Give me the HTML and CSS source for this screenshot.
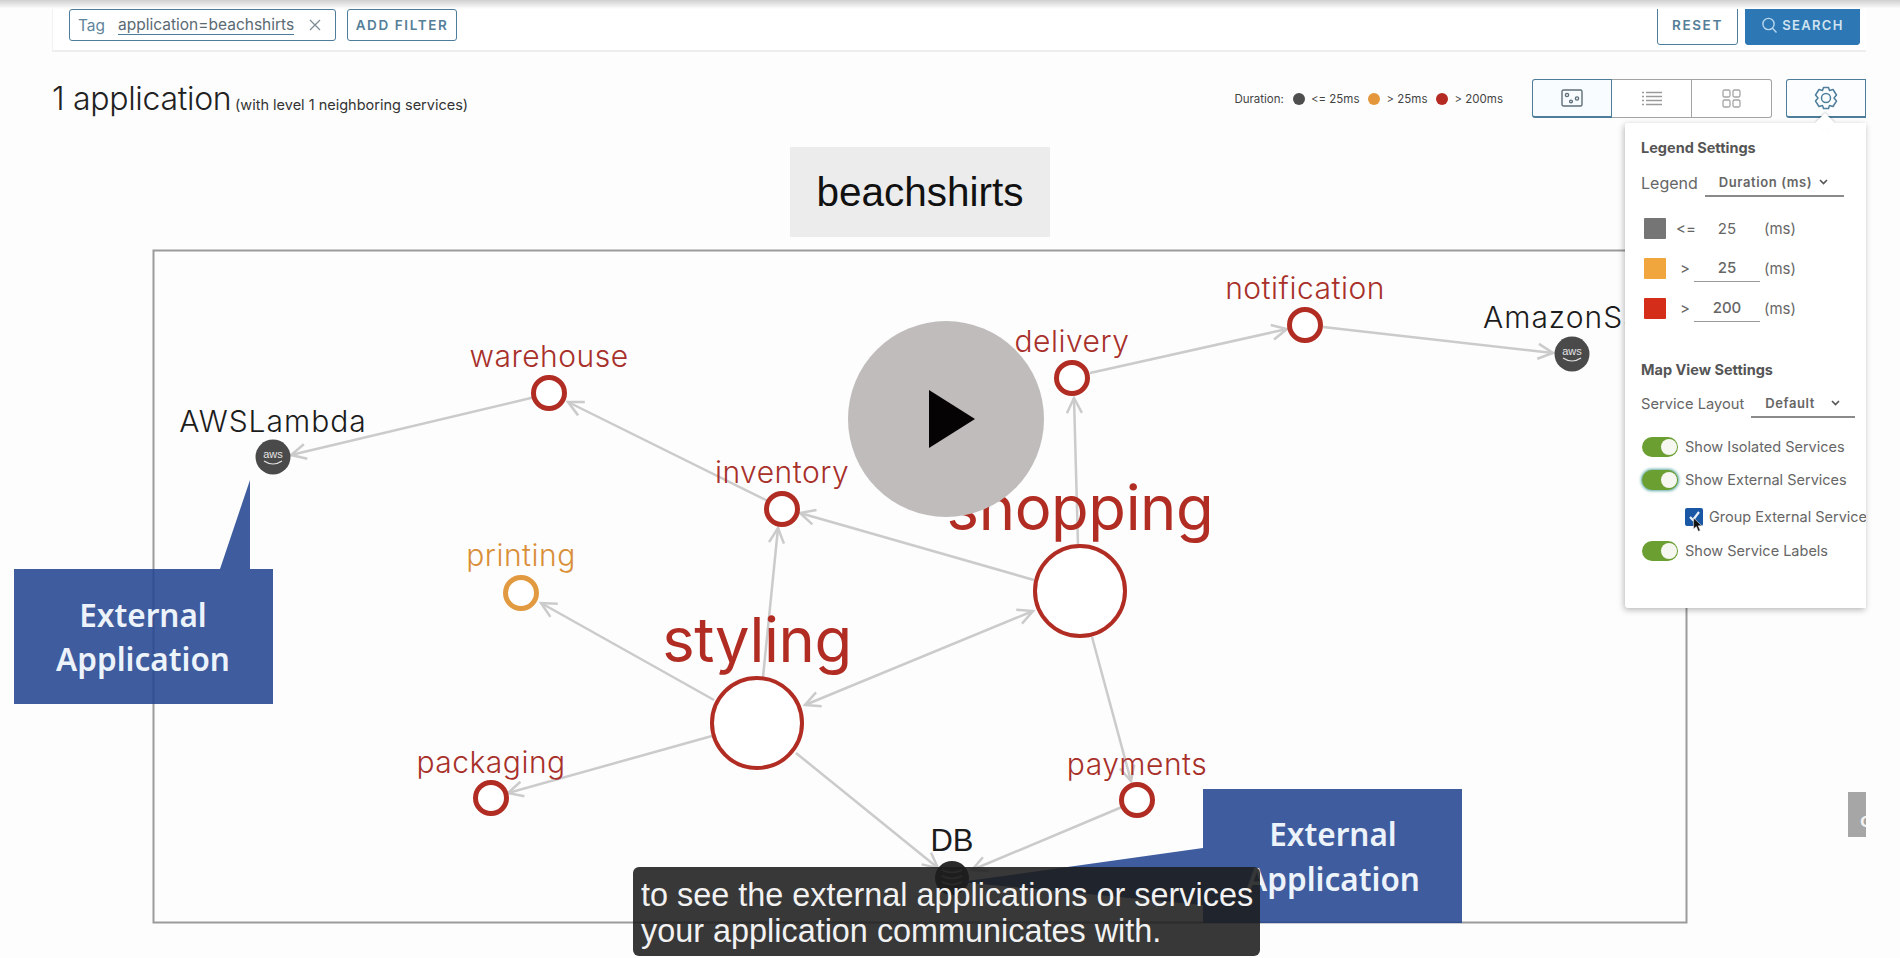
FILE: index.html
```html
<!DOCTYPE html>
<html>
<head>
    <meta charset="utf-8" />
    <title>Application map</title>
    <link rel="stylesheet" href="styles.css">
</head>
<body>
<div class="frame">
    <div class="top_shade"></div>

    <div class="filter_bar">
        <div class="chip">
            <span class="chip_key">Tag</span>
            <span class="chip_value">application=beachshirts</span>
            <svg class="chip_x" width="12" height="12" viewBox="0 0 12 12"><path d="M1 1L11 11M11 1L1 11" stroke="#7d8b95" stroke-width="1.3" fill="none"/></svg>
        </div>
        <div class="btn">ADD FILTER</div>
        <div class="bar_gap"></div>
        <div class="btn btn_reset">RESET</div>
        <div class="btn btn_search">
            <svg width="17" height="17" viewBox="0 0 17 17" fill="none" stroke="#b9d8ee" stroke-width="1.4"><circle cx="7.5" cy="7" r="5.6"/><path d="M11.5 11.2L15.5 15.5"/></svg>
            SEARCH
        </div>
    </div>

    <div class="head_row">
        <div class="app_title">1 application <span class="app_sub">(with level 1 neighboring services)</span></div>
        <div class="legend">
            <span>Duration:</span>
            <i class="dot dot_gray"></i><span>&lt;= 25ms</span>
            <i class="dot dot_orange"></i><span>&gt; 25ms</span>
            <i class="dot dot_red"></i><span>&gt; 200ms</span>
        </div>
        <div class="view_group">
            <div class="view_btn view_on">
                <svg width="22" height="18" viewBox="0 0 22 18" fill="none" stroke="#5f6f78" stroke-width="1.4"><rect x="1" y="1" width="20" height="16" rx="1.5"/><circle cx="6" cy="6" r="1.6"/><circle cx="10" cy="12.500" r="1.400"/><circle cx="16" cy="9.500" r="1.600"/></svg>
            </div>
            <div class="view_btn">
                <svg width="22" height="15" viewBox="0 0 22 15" stroke="#9a9a9a" stroke-width="1.3"><path d="M1 1.500H3M5 1.500H21M1 5.500H3M5 5.500H21M1 9.500H3M5 9.500H21M1 13.500H3M5 13.500H21"/></svg>
            </div>
            <div class="view_btn">
                <svg width="19" height="19" viewBox="0 0 19 19" fill="none" stroke="#a5a5a5" stroke-width="1.3"><rect x="1" y="1" width="7" height="7" rx="1.5"/><rect x="11" y="1" width="7" height="7" rx="1.5"/><rect x="1" y="11" width="7" height="7" rx="1.5"/><rect x="11" y="11" width="7" height="7" rx="1.5"/></svg>
            </div>
        </div>
        <div class="view_btn gear_btn">
            <svg width="24" height="24" viewBox="0 0 24 24" fill="none" stroke="#4f7f9c" stroke-width="1.5"><path d="M9.500 1.500H14.500L15.500 4.500L19 3.500L22.500 9L20 12L22.500 15L19 20.500L15.500 19.500L14.500 22.500H9.500L8.500 19.500L5 20.500L1.500 15L4 12L1.500 9L5 3.500L8.500 4.500Z" stroke-linejoin="round"/><circle cx="12" cy="12" r="4.500"/></svg>
        </div>
    </div>

    <svg class="map" width="1900" height="838" viewBox="0 120 1900 838">
        <defs>
            <marker id="arrow" markerUnits="userSpaceOnUse" markerWidth="24" markerHeight="24" refX="20" refY="12" orient="auto-start-reverse">
                <path d="M5 4.500L20 12L5 19.500" fill="none" stroke="#cbcbcb" stroke-width="2.500"/>
            </marker>
        </defs>

        <rect class="title_box" x="790" y="147" width="260" height="90"/>
        <text class="title_text" x="920" y="206">beachshirts</text>
        <rect class="map_box" x="153.500" y="250.500" width="1533" height="672"/>

        <g class="edges">
            <line x1="535" y1="397" x2="291" y2="455" marker-end="url(#arrow)"/>
            <line x1="768" y1="501" x2="568" y2="402" marker-end="url(#arrow)"/>
            <line x1="763" y1="677" x2="778" y2="528" marker-end="url(#arrow)"/>
            <line x1="1034" y1="580" x2="800" y2="513" marker-end="url(#arrow)"/>
            <line x1="714" y1="700" x2="541" y2="603" marker-end="url(#arrow)"/>
            <line x1="805" y1="705" x2="1033" y2="611" marker-start="url(#arrow)" marker-end="url(#arrow)"/>
            <line x1="712" y1="736" x2="508" y2="793" marker-end="url(#arrow)"/>
            <line x1="796" y1="753" x2="938" y2="868" marker-end="url(#arrow)"/>
            <line x1="1078" y1="545" x2="1074" y2="398" marker-end="url(#arrow)"/>
            <line x1="1090" y1="373" x2="1287" y2="329" marker-end="url(#arrow)"/>
            <line x1="1323" y1="327" x2="1553" y2="353" marker-end="url(#arrow)"/>
            <line x1="1092" y1="637" x2="1131" y2="781" marker-end="url(#arrow)"/>
            <line x1="1122" y1="807" x2="972" y2="870" marker-end="url(#arrow)"/>
        </g>

        <g class="nodes">
            <circle class="ring" cx="549" cy="393" r="15.500"/>
            <circle class="ring" cx="782" cy="509" r="15.500"/>
            <circle class="ring ring_orange" cx="521" cy="593" r="15.500"/>
            <circle class="ring ring_big" cx="757" cy="723" r="45"/>
            <circle class="ring ring_big" cx="1080" cy="591" r="45"/>
            <circle class="ring" cx="1072" cy="378" r="15.500"/>
            <circle class="ring" cx="1305" cy="325" r="15.500"/>
            <circle class="ring" cx="491" cy="798" r="15.500"/>
            <circle class="ring" cx="1137" cy="800" r="15.500"/>

            <g transform="translate(273 457)">
                <circle class="ext_node" r="17.500"/>
                <text class="aws_text" y="1">aws</text>
                <path class="aws_smile" d="M-9 4Q0 10 9 4"/>
            </g>
            <g transform="translate(1572 354)">
                <circle class="ext_node" r="17.500"/>
                <text class="aws_text" y="1">aws</text>
                <path class="aws_smile" d="M-9 4Q0 10 9 4"/>
            </g>
            <g transform="translate(952 878)">
                <circle class="db_node" r="17"/>
                <path class="db_lines" d="M-10 -8Q0 -3 10 -8M-10 -2Q0 3 10 -2M-10 4Q0 9 10 4"/>
            </g>
        </g>

        <g class="labels">
            <text x="549" y="367">warehouse</text>
            <text x="782" y="483">inventory</text>
            <text class="lab_orange" x="521" y="566">printing</text>
            <text class="lab_big" x="757" y="662">styling</text>
            <text class="lab_big" x="1080" y="530">shopping</text>
            <text x="1072" y="352">delivery</text>
            <text x="1305" y="299">notification</text>
            <text x="491" y="773">packaging</text>
            <text x="1137" y="775">payments</text>
            <text class="lab_black" x="273" y="432">AWSLambda</text>
            <text class="lab_black lab_start" x="1483" y="328">AmazonS3</text>
            <text class="lab_black lab_db" x="952" y="851">DB</text>
        </g>

        <g class="callouts">
            <path d="M14 569H220L250 480V569H273V704H14Z"/>
            <path d="M1203 789H1462V923H1203V905L960 882L1203 848Z"/>
            <text x="143" y="627">External</text>
            <text x="143" y="671">Application</text>
            <text x="1333" y="846">External</text>
            <text x="1333" y="891">Application</text>
        </g>
    </svg>

    <div class="side_tab">c</div>

    <div class="popover">
        <div class="pop_title">Legend Settings</div>
        <div class="pop_row">
            <span class="pop_label pop_label_big">Legend</span>
            <span class="pop_select pop_select_wide">Duration (ms) <svg width="9" height="6" viewBox="0 0 9 6"><path d="M1 1L4.500 4.500L8 1" fill="none" stroke="#555" stroke-width="1.600"/></svg></span>
        </div>
        <div class="range_list">
            <div class="range_row"><i class="swatch sw_gray"></i><span class="range_op">&lt;=</span><span class="range_val">25</span><span>(ms)</span></div>
            <div class="range_row"><i class="swatch sw_orange"></i><span class="range_op range_gt">&gt;</span><span class="range_val range_input">25</span><span>(ms)</span></div>
            <div class="range_row"><i class="swatch sw_red"></i><span class="range_op range_gt">&gt;</span><span class="range_val range_input">200</span><span>(ms)</span></div>
        </div>

        <div class="pop_title pop_title_map">Map View Settings</div>
        <div class="pop_row pop_row_map">
            <span class="pop_label">Service Layout</span>
            <span class="pop_select pop_select_layout">Default <svg width="9" height="6" viewBox="0 0 9 6"><path d="M1 1L4.500 4.500L8 1" fill="none" stroke="#555" stroke-width="1.600"/></svg></span>
        </div>
        <div class="toggle_list">
            <div class="toggle_row"><i class="toggle"></i>Show Isolated Services</div>
            <div class="toggle_row"><i class="toggle toggle_focus"></i>Show External Services</div>
            <div class="check_row">
                <i class="check">
                    <svg class="tick" width="18" height="18" viewBox="0 0 18 18"><path d="M5 9L8 12L14 4" fill="none" stroke="#e8f0fa" stroke-width="2.200"/></svg>
                    <svg class="cursor" width="11" height="16" viewBox="0 0 14 20"><path d="M2 1V15L5.500 12L8 18L10.500 17L8 11H12.500Z" fill="#111" stroke="#eee" stroke-width=".8"/></svg>
                </i>
                Group External Services
            </div>
            <div class="toggle_row"><i class="toggle"></i>Show Service Labels</div>
        </div>
    </div>
    <div class="pop_arrow"></div>

    <div class="play">
        <svg width="46" height="58" viewBox="0 0 46 58"><path d="M0 0L46 29L0 58Z" fill="#060304"/></svg>
    </div>

    <div class="caption">to see the external applications or services<br>your application communicates with.</div>
</div>
</body>
</html>
```

FILE: styles.css
```css
html, body {
    margin: 0;
    padding: 0;
}

body {
    background: #fff;
    font-family: "Inter", "Noto Sans", sans-serif;
    color: #333;
    overflow: hidden;
}

.frame {
    position: relative;
    width: 1900px;
    height: 958px;
    overflow: hidden;
    background: #fdfdfd;
}

.top_shade {
    position: absolute;
    left: 0;
    top: 0;
    width: 100%;
    height: 9px;
    background: linear-gradient(180deg, #cfcfcf 0%, #ececec 60%, #fff 100%);
    z-index: 2;
}

/* filter bar */
.filter_bar {
    display: flex;
    align-items: center;
    gap: 11px;
    height: 50px;
    margin: 0 34px 0 52px;
    padding: 0 6px 0 16px;
    border-left: 1px solid #f1f1f1;
    border-bottom: 2px solid #eeeeee;
    background: #fff;
}

.bar_gap {
    flex: 1;
}

.chip {
    display: flex;
    align-items: center;
    width: 267px;
    height: 32px;
    box-sizing: border-box;
    padding: 0 8px;
    border: 1px solid #4d7d9a;
    border-radius: 3px;
    font-size: 15.500px;
    color: #5a6a73;
}

.chip_key {
    color: #61859c;
    margin-right: 13px;
}

.chip_value {
    border-bottom: 1px solid #4d7d9a;
    line-height: 19px;
}

.chip_x {
    margin-left: 15px;
}

.btn {
    display: flex;
    align-items: center;
    justify-content: center;
    width: 110px;
    height: 32px;
    box-sizing: border-box;
    border: 1px solid #4d7d9a;
    border-radius: 3px;
    font-size: 13.500px;
    font-weight: 600;
    letter-spacing: 1.600px;
    color: #557f99;
}

.btn_reset {
    width: 81px;
    height: 39px;
    margin-right: -4px;
}

.btn_search {
    width: 115px;
    height: 39px;
    gap: 4px;
    font-size: 13px;
    letter-spacing: 1.300px;
    background: #2c77b4;
    border-color: #2c77b4;
    color: #cfe3f1;
}

/* heading row */
.head_row {
    display: flex;
    align-items: center;
    height: 39px;
    margin: 27px 34px 0 52px;
}

.app_title {
    flex: 1;
    font-size: 32px;
    font-weight: 300;
    color: #222;
    letter-spacing: -0.300px;
}

.app_sub {
    margin-left: -5px;
    font-size: 14.500px;
    font-weight: 400;
    letter-spacing: 0;
    color: #333;
}

.legend {
    display: flex;
    align-items: center;
    gap: 6px;
    margin-right: 29px;
    font-size: 11.500px;
    color: #444;
}

.dot {
    width: 12px;
    height: 12px;
    border-radius: 50%;
    margin-left: 3px;
}

.dot_gray { background: #4e4e4e; }
.dot_orange { background: #e4963b; }
.dot_red { background: #b52a22; }

.view_group {
    display: flex;
    margin-right: 14px;
}

.view_btn {
    display: flex;
    align-items: center;
    justify-content: center;
    width: 80px;
    height: 39px;
    box-sizing: border-box;
    border: 1px solid #a3a3a3;
    border-left-width: 0;
    background: #fff;
}

.view_btn:last-child {
    border-radius: 0 3px 3px 0;
}

.view_on {
    border: 1px solid #4d7d9a;
    border-bottom-width: 2px;
    border-radius: 3px 0 0 3px;
    background: #f8fcff;
}

.view_btn.gear_btn {
    border: 1px solid #4d7d9a;
    border-bottom-width: 2px;
    border-radius: 3px 0 0 3px;
    background: #fbfdff;
}

/* map */
.map {
    display: block;
    margin-top: 2px;
}

.title_box {
    fill: #ececec;
}

.title_text {
    font-family: "Liberation Sans", sans-serif;
    font-size: 40.500px;
    fill: #111;
    text-anchor: middle;
}

.map_box {
    fill: none;
    stroke: #9b9b9b;
    stroke-width: 2;
}

.edges line {
    stroke: #cbcbcb;
    stroke-width: 2.500;
}

.ring {
    fill: #fff;
    stroke: #b12c22;
    stroke-width: 5;
}

.ring_orange {
    stroke: #e19a40;
}

.ring_big {
    stroke-width: 4;
}

.ext_node {
    fill: #4a4a4a;
}

.aws_text {
    font-family: "Liberation Sans", sans-serif;
    font-size: 11px;
    fill: #e4e4e4;
    text-anchor: middle;
}

.aws_smile {
    fill: none;
    stroke: #e4e4e4;
    stroke-width: 1.200;
}

.db_node {
    fill: #2b2b2b;
}

.db_lines {
    fill: none;
    stroke: #8b8b8b;
    stroke-width: 1.500;
}

.labels text {
    font-size: 30px;
    font-weight: 300;
    letter-spacing: .5px;
    fill: #a8302a;
    text-anchor: middle;
}

.labels .lab_orange {
    fill: #d98f38;
}

.labels .lab_big {
    font-size: 61.500px;
    font-weight: 400;
    letter-spacing: -.4px;
    fill: #b12c22;
}

.labels .lab_black {
    letter-spacing: 1px;
    fill: #1c1c1c;
}

.labels .lab_start {
    text-anchor: start;
}

.labels .lab_db {
    font-family: "Liberation Sans", sans-serif;
    font-size: 31px;
    font-weight: 400;
    letter-spacing: 0;
}

.callouts path {
    fill: #234691;
    opacity: 0.88;
}

.callouts text {
    font-family: "Noto Sans", sans-serif;
    font-size: 31.500px;
    font-weight: 600;
    fill: #edf3fa;
    text-anchor: middle;
}

.side_tab {
    position: absolute;
    left: 1848px;
    top: 792px;
    width: 18px;
    height: 45px;
    padding-left: 12px;
    box-sizing: border-box;
    background: #a6a6a6;
    color: #f2f2f2;
    font-size: 20px;
    font-weight: 600;
    line-height: 56px;
    overflow: hidden;
}

/* settings popover */
.popover {
    position: absolute;
    left: 1625px;
    top: 123px;
    width: 241px;
    height: 485px;
    box-sizing: border-box;
    padding: 15px 0 0 16px;
    background: #fff;
    border-radius: 3px 0 0 3px;
    box-shadow: -1px 2px 6px rgba(0, 0, 0, .28);
    font-size: 14.500px;
    color: #666;
    white-space: nowrap;
    overflow: hidden;
}

.pop_arrow {
    position: absolute;
    left: 1818px;
    top: 116px;
    width: 14px;
    height: 14px;
    background: #fff;
    transform: rotate(45deg);
    box-shadow: -1px -1px 2px rgba(0, 0, 0, .15);
}

.pop_title {
    font-size: 14.500px;
    font-weight: 700;
    color: #555;
    line-height: 20px;
}

.pop_title_map {
    margin-top: 32px;
}

.pop_row {
    display: flex;
    align-items: center;
    height: 34px;
    margin-top: 8px;
}

.pop_row_map {
    margin-top: 7px;
}

.pop_label {
    font-size: 14.700px;
}

.pop_label_big {
    font-size: 16px;
}

.pop_select {
    display: flex;
    align-items: center;
    gap: 7px;
    height: 28px;
    margin-left: 7px;
    padding-left: 14px;
    box-sizing: border-box;
    border-bottom: 2px solid #8a8a8a;
    font-size: 13px;
    font-weight: 600;
    letter-spacing: .6px;
    color: #666;
}

.pop_select_wide {
    width: 139px;
}

.pop_select_layout {
    width: 104px;
    gap: 16px;
}

.range_list {
    margin-top: 8px;
}

.range_row {
    display: flex;
    align-items: center;
    height: 40px;
    font-size: 15px;
}

.swatch {
    width: 22px;
    height: 21px;
    margin-left: 3px;
    margin-right: 10px;
    border-radius: 1px;
}

.sw_gray { background: #757575; }
.sw_orange { background: #f0a63c; }
.sw_red { background: #d42d1a; }

.range_op {
    width: 18px;
    box-sizing: border-box;
}

.range_gt {
    padding-left: 4px;
}

.range_val {
    width: 66px;
    text-align: center;
    margin-right: 4px;
    line-height: 27px;
}

.range_input {
    border-bottom: 1px solid #999;
    font-weight: 500;
}

.toggle_list {
    margin-top: 9px;
}

.toggle_row {
    display: flex;
    align-items: center;
    gap: 7px;
    height: 33px;
    font-size: 14.500px;
}

.toggle {
    position: relative;
    flex: none;
    width: 36px;
    height: 20px;
    margin-left: 1px;
    border-radius: 10px;
    background: #6c9f32;
}

.toggle::after {
    content: "";
    position: absolute;
    right: 1px;
    top: 2px;
    width: 16px;
    height: 16px;
    border-radius: 50%;
    background: #f7f7f2;
}

.toggle_focus {
    box-shadow: 0 0 3px 1px #5aa9a3;
}

.check_row {
    display: flex;
    align-items: center;
    gap: 6px;
    height: 38px;
    padding: 3px 0 0 44px;
    box-sizing: border-box;
    font-size: 14.500px;
}

.check {
    position: relative;
    flex: none;
    width: 18px;
    height: 18px;
    border-radius: 2px;
    background: #1a58a6;
}

.tick {
    position: absolute;
    left: 0;
    top: 0;
}

.cursor {
    position: absolute;
    left: 7px;
    top: 9px;
}

/* video overlays */
.play {
    position: absolute;
    left: 848px;
    top: 321px;
    display: flex;
    align-items: center;
    justify-content: center;
    width: 196px;
    height: 196px;
    padding-left: 12px;
    box-sizing: border-box;
    border-radius: 50%;
    background: #c0bcbc;
}

.caption {
    position: absolute;
    left: 633px;
    top: 867px;
    width: 627px;
    height: 89px;
    box-sizing: border-box;
    padding: 10px 0 0 8px;
    border-radius: 6px;
    background: rgba(28, 28, 28, .88);
    font-family: "Liberation Sans", sans-serif;
    font-size: 32.400px;
    line-height: 36px;
    color: #f2f2f2;
    white-space: nowrap;
}
```
